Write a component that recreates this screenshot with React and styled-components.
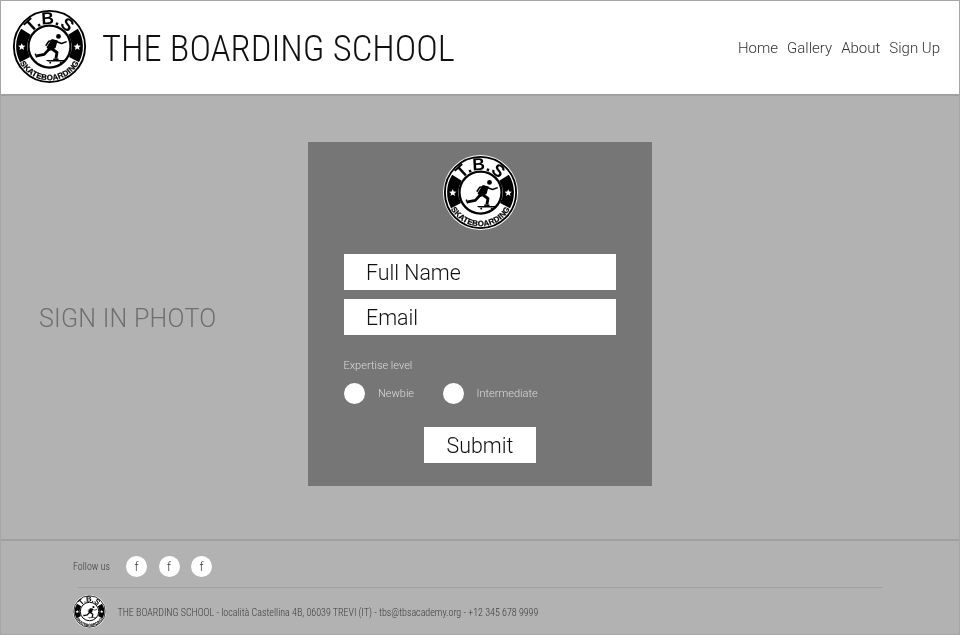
import React from 'react'
import styled, { createGlobalStyle } from 'styled-components'

const GlobalStyle = createGlobalStyle`
  html, body {
    margin: 0;
    padding: 0;
  }

  body {
    font-family: Roboto, "Liberation Sans", sans-serif;
    font-weight: 300;
    background: #b2b2b2;
  }
`

const Page = styled.div`
  width: 960px;
  height: 635px;
  box-sizing: border-box;
  border: 1px solid #a6a6a6;
  display: flex;
  flex-direction: column;
  overflow: hidden;
  background: #b2b2b2;
  filter: grayscale(1);
`

const Header = styled.header`
  height: 95px;
  flex: none;
  box-sizing: border-box;
  background: #fff;
  border-bottom: 2px solid #a0a0a0;
  display: flex;
  align-items: center;
  padding: 0 19px 2px 11px;
`

const Brand = styled.h1`
  margin: 4px 0 0 15px;
  font-size: 36.5px;
  font-weight: 300;
  font-stretch: 75%;
  color: #111;
  flex: 1;
`

const Nav = styled.nav`
  display: flex;
  gap: 9px;
  margin-top: 2px;
`

const NavLink = styled.a`
  font-size: 15px;
  color: #333;
`

const Main = styled.main`
  flex: 1;
  display: grid;
  grid-template-columns: 307px 344px;
  align-items: center;
  padding-bottom: 8px;
`

const PhotoLabel = styled.div`
  font-size: 25px;
  letter-spacing: 0.25px;
  color: #6f6f6f;
  padding: 10px 0 0 38px;
`

const Card = styled.form`
  height: 344px;
  box-sizing: border-box;
  background: #767676;
  display: flex;
  flex-direction: column;
  padding: 13px 36px 0;
`

const CardLogo = styled.div`
  align-self: center;
  height: 75px;
  margin-bottom: 24px;
`

const Field = styled.div`
  height: 36px;
  box-sizing: border-box;
  background: #fff;
  margin-bottom: 9px;
  padding: 2px 0 0 22px;
  display: flex;
  align-items: center;
  font-size: 21.33px;
  color: #111;
`

const FieldLabel = styled.div`
  margin: 15px 0 0 -0.5px;
  font-size: 11px;
  color: #dcdcdc;
`

const Radios = styled.div`
  display: flex;
  gap: 28.5px;
  margin-top: 11px;
`

const RadioRow = styled.label`
  display: flex;
  align-items: center;
  gap: 13px;
  font-size: 11px;
  color: #dcdcdc;
`

const RadioDot = styled.span`
  width: 21px;
  height: 21px;
  border-radius: 50%;
  background: #fff;
`

const SubmitButton = styled.div`
  align-self: center;
  width: 112px;
  height: 36px;
  box-sizing: border-box;
  margin-top: 23px;
  padding-top: 2px;
  background: #fff;
  display: flex;
  align-items: center;
  justify-content: center;
  font-size: 21.33px;
  color: #111;
`

const Footer = styled.footer`
  height: 95px;
  flex: none;
  box-sizing: border-box;
  border-top: 2px solid #a0a0a0;
  padding: 0 76px 0 72px;
`

const Social = styled.div`
  height: 46px;
  padding-top: 4px;
  box-sizing: border-box;
  display: flex;
  align-items: center;
  font-size: 10px;
  color: #3c3c3c;
`

const SocialLabel = styled.span`
  width: 53px;
  font-stretch: 75%;
`

const SocialDot = styled.span`
  width: 21px;
  height: 21px;
  box-sizing: border-box;
  padding-top: 2px;
  border-radius: 50%;
  background: #fff;
  margin-right: 11.5px;
  display: flex;
  align-items: center;
  justify-content: center;
  font-size: 12px;
  color: #333;
`

const Contact = styled.div`
  border-top: 1px solid #a0a0a0;
  margin-left: 5px;
  box-sizing: border-box;
  display: flex;
  align-items: center;
  height: 47px;
  font-size: 10px;
  font-stretch: 75%;
  color: #3c3c3c;
`

const ContactLogo = styled.div`
  margin-left: -5px;
  margin-right: 11.5px;
  height: 33px;
`

const ContactText = styled.span`
  padding-top: 2px;
`

const Logo = ({ size, id }) => (
  <svg width={size} height={size} viewBox='0 0 100 100' style={{ display: 'block' }}>
    <defs>
      <path id={`${id}-top`} d='M 20 50 A 30 30 0 0 1 80 50' />
      <path id={`${id}-bottom`} d='M 5 50 A 45 45 0 0 0 95 50' />
    </defs>
    <circle cx='50' cy='50' r='50' fill='#fff' />
    <circle cx='50' cy='50' r='47.500' fill='#fff' stroke='#000' strokeWidth='2.500' />
    <path d='M 81.400 30.400 A 37 37 0 0 1 82.700 67.400' fill='none' stroke='#000' strokeWidth='15' />
    <path d='M 18.600 30.400 A 37 37 0 0 0 17.300 67.400' fill='none' stroke='#000' strokeWidth='15' />
    <circle cx='50' cy='50' r='28' fill='#fff' stroke='#000' strokeWidth='3' />
    <text fontFamily='"Liberation Sans", sans-serif' fontWeight='700' fontSize='23' textAnchor='middle'>
      <textPath href={`#${id}-top`} startOffset='50%'>T.B.S</textPath>
    </text>
    <text fontFamily='"Liberation Sans", sans-serif' fontWeight='700' fontSize='10.500' letterSpacing='0.3' stroke='#000' strokeWidth='0.3' textAnchor='middle'>
      <textPath href={`#${id}-bottom`} startOffset='50%'>SKATEBOARDING</textPath>
    </text>
    <path d='M 13 45 l 1.400 3.200 3.400 .3 -2.600 2.200 .8 3.300 -3 -1.800 -3 1.800 .8 -3.300 -2.600 -2.200 3.400 -.3z' fill='#fff' transform='translate(0 .5)' />
    <path d='M 87 45 l 1.400 3.200 3.400 .3 -2.600 2.200 .8 3.300 -3 -1.800 -3 1.800 .8 -3.300 -2.600 -2.200 3.400 -.3z' fill='#fff' transform='translate(0 .5)' />
    <circle cx='62' cy='36.500' r='3.200' fill='#000' />
    <path d='M 56 42 L 49 43 L 45 49 M 58 43 L 66 46 L 73 43.500' fill='none' stroke='#000' strokeWidth='2' strokeLinejoin='round' />
    <path d='M 53 40 L 61 42 L 58 52 L 50 56 L 46 51 Z' fill='#000' />
    <path d='M 51.500 52 L 60 58 L 58.500 66 M 49.500 53.500 L 43 60.500 L 33 62.500' fill='none' stroke='#000' strokeWidth='3.800' strokeLinejoin='round' />
    <path d='M 31 59.500 L 33 64.500' fill='none' stroke='#000' strokeWidth='2' />
    <path d='M 55 67 h 7' stroke='#000' strokeWidth='2' />
    <path d='M 45 68 h 26 l -3 2 h -20 z' fill='#000' />
    <circle cx='51' cy='71.500' r='1.300' fill='#000' />
    <circle cx='65' cy='71.500' r='1.300' fill='#000' />
  </svg>
)

const App = () => (
  <Page>
    <GlobalStyle />
    <Header>
      <Logo size={75} id='head' />
      <Brand>THE BOARDING SCHOOL</Brand>
      <Nav>
        <NavLink>Home</NavLink>
        <NavLink>Gallery</NavLink>
        <NavLink>About</NavLink>
        <NavLink>Sign Up</NavLink>
      </Nav>
    </Header>
    <Main>
      <PhotoLabel>SIGN IN PHOTO</PhotoLabel>
      <Card>
        <CardLogo><Logo size={75} id='card' /></CardLogo>
        <Field>Full Name</Field>
        <Field>Email</Field>
        <FieldLabel>Expertise level</FieldLabel>
        <Radios>
          <RadioRow><RadioDot />Newbie</RadioRow>
          <RadioRow><RadioDot />Intermediate</RadioRow>
        </Radios>
        <SubmitButton>Submit</SubmitButton>
      </Card>
    </Main>
    <Footer>
      <Social>
        <SocialLabel>Follow us</SocialLabel>
        <SocialDot>f</SocialDot>
        <SocialDot>f</SocialDot>
        <SocialDot>f</SocialDot>
      </Social>
      <Contact>
        <ContactLogo><Logo size={33} id='foot' /></ContactLogo>
        <ContactText>THE BOARDING SCHOOL - località Castellina 4B, 06039 TREVI (IT) - tbs@tbsacademy.org - +12 345 678 9999</ContactText>
      </Contact>
    </Footer>
  </Page>
)

export default App
